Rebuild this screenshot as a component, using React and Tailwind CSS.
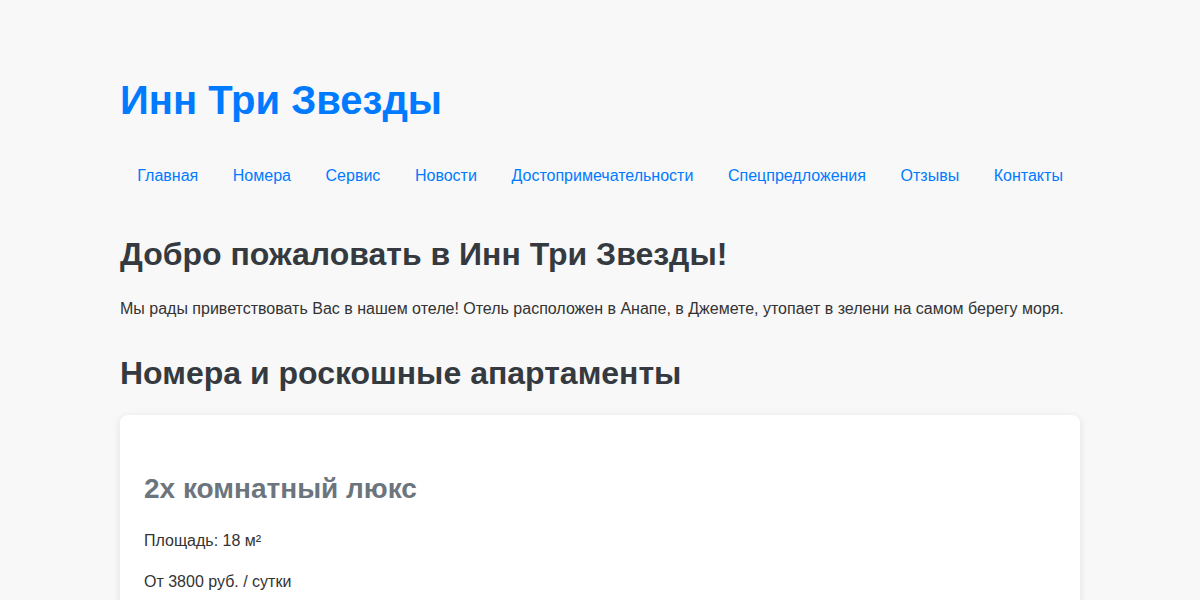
import { useState } from 'react'

const links = ['Главная', 'Номера', 'Сервис', 'Новости', 'Достопримечательности', 'Спецпредложения', 'Отзывы', 'Контакты']

export default function App() {
    const [active, setActive] = useState(null)

    return (
        <div className="min-h-screen bg-[#f8f8f8] font-['Liberation_Sans',Arial,sans-serif] text-[#333]">
            <div className="max-w-[960px] mx-auto pt-[76px]">
                {/* Шапка */}
                <header>
                    <h1 className="text-[40px] leading-[1.2] font-bold text-[#007bff]">Инн Три Звезды</h1>
                    <nav className="flex whitespace-nowrap mt-[32px]">
                        {links.map(l => (
                            <a
                                key={l}
                                href="#"
                                onClick={e => { e.preventDefault(); setActive(l) }}
                                className={`shrink-0 px-[17.3px] py-2 text-base leading-6 text-[#007bff] hover:underline ${active === l ? 'underline' : ''}`}
                            >
                                {l}
                            </a>
                        ))}
                    </nav>
                </header>

                {/* Приветствие */}
                <section className="mt-[39px]">
                    <h2 className="text-[32px] leading-[1.2] font-bold text-[#343a40]">Добро пожаловать в Инн Три Звезды!</h2>
                    <p className="mt-6 text-base leading-6">
                        Мы рады приветствовать Вас в нашем отеле! Отель расположен в Анапе, в Джемете, утопает в зелени на самом берегу моря.
                    </p>
                </section>

                {/* Номера */}
                <section className="mt-[33px]">
                    <h2 className="text-[32px] leading-[1.2] font-bold text-[#343a40]">Номера и роскошные апартаменты</h2>
                    <div className="mt-[22px] bg-white rounded-lg shadow-[0_2px_8px_rgba(0,0,0,0.1)] px-6 pt-[57px] pb-6">
                        <h3 className="text-[28px] leading-[1.2] font-bold text-[#6c757d]">2x комнатный люкс</h3>
                        <p className="mt-[24px] text-base leading-6">Площадь: 18 м²</p>
                        <p className="mt-[17px] text-base leading-6">От 3800 руб. / сутки</p>
                    </div>
                </section>
            </div>
        </div>
    )
}
